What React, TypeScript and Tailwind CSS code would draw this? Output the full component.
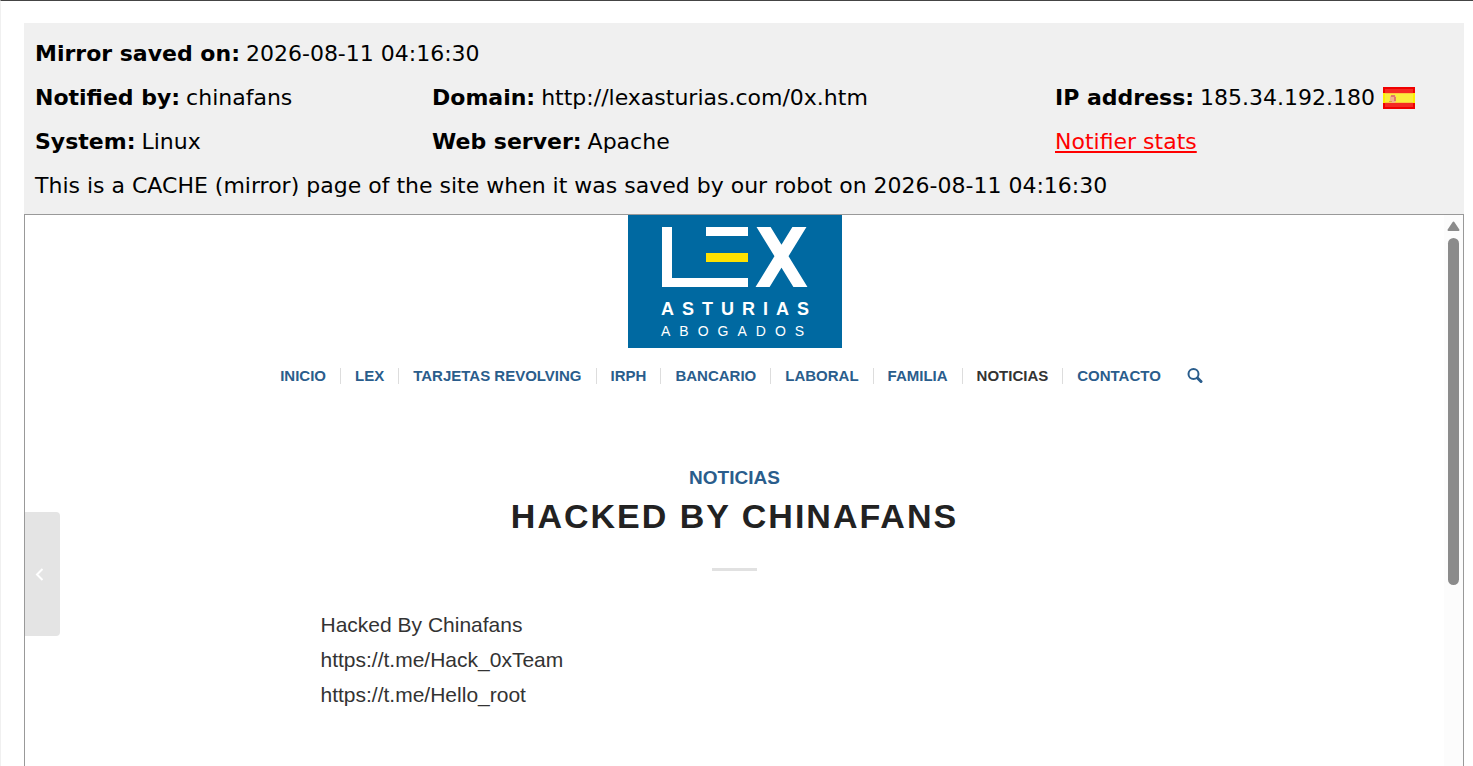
import { ReactNode } from "react";

interface NavItem {
  label: string;
  active?: boolean;
}

const navItems: NavItem[] = [
  { label: "INICIO" },
  { label: "LEX" },
  { label: "TARJETAS REVOLVING" },
  { label: "IRPH" },
  { label: "BANCARIO" },
  { label: "LABORAL" },
  { label: "FAMILIA" },
  { label: "NOTICIAS", active: true },
  { label: "CONTACTO" },
];

const bodyLines = [
  "Hacked By Chinafans",
  "https://t.me/Hack_0xTeam",
  "https://t.me/Hello_root",
];

const Field = ({ label, children }: { label: string; children: ReactNode }) => (
  <div className="flex items-center gap-1.5 whitespace-nowrap">
    <b>{label}</b>
    {children}
  </div>
);

const SpainFlag = () => (
  <svg
    width="32"
    height="22"
    viewBox="0 0 32 22"
    role="img"
    aria-label="Spain"
    className="ml-0.5"
  >
    <rect width="32" height="22" fill="#f00000" />
    <rect x="2" y="2" width="28" height="18" fill="#f52a22" />
    <rect y="6" width="32" height="10" fill="#fcf000" />
    <rect x="2" y="6" width="28" height="10" fill="#fbee3c" />
    <rect x="2" y="6" width="28" height="1" fill="#fbc93c" />
    <rect x="2" y="15" width="28" height="1" fill="#fbc93c" />
    <path d="M7 9h6v4a3 3 0 0 1-6 0z" fill="#f2b48a" />
    <path d="M8 8h4v2H8zM11 10h2v4h-2z" fill="#e2786a" />
    <path d="M6 14h3v1H6z" fill="#d9a04c" />
  </svg>
);

const Logo = () => (
  <svg
    width="214"
    height="133"
    viewBox="0 0 214 133"
    role="img"
    aria-label="Lex Asturias Abogados"
    fontFamily="Liberation Sans, Arial, sans-serif"
    fill="#ffffff"
  >
    <rect width="214" height="133" fill="#0069a1" />
    <rect x="34" y="12" width="10" height="60" />
    <rect x="34" y="63" width="86" height="9" />
    <rect x="78" y="12" width="42" height="9" />
    <rect x="78" y="38" width="42" height="9" fill="#ffe100" />
    {/* crossed strokes, cut flat at the top and bottom */}
    <svg x="124" y="12" width="60" height="60" viewBox="0 0 60 60">
      <path
        d="M4.200 -12L55.800 72M54.800 -12L3.200 72"
        stroke="#ffffff"
        strokeWidth="12"
        fill="none"
      />
    </svg>
    <text x="33" y="100" fontSize="18" fontWeight="700" letterSpacing="8">
      ASTURIAS
    </text>
    <text x="33" y="121" fontSize="14" letterSpacing="9">
      ABOGADOS
    </text>
  </svg>
);

const SearchIcon = () => (
  <svg
    width="16"
    height="16"
    viewBox="0 0 16 16"
    fill="none"
    stroke="currentColor"
    aria-hidden="true"
  >
    <circle cx="6.5" cy="6" r="5" strokeWidth="2" />
    <path d="M10.5 10L14 13.5" strokeWidth="3" strokeLinecap="round" />
  </svg>
);

const MirrorInfo = () => (
  <header className="bg-[#f0f0f0] px-[11px] pt-[9px] pb-1.5 font-['DejaVu_Sans',Verdana,sans-serif] text-[22px] leading-[44px] text-black">
    <div className="grid grid-cols-[397fr_623fr_398fr]">
      <div className="col-span-3">
        <Field label="Mirror saved on:">2026-08-11 04:16:30</Field>
      </div>
      <Field label="Notified by:">chinafans</Field>
      <Field label="Domain:">http://lexasturias.com/0x.htm</Field>
      <Field label="IP address:">
        185.34.192.180
        <SpainFlag />
      </Field>
      <Field label="System:">Linux</Field>
      <Field label="Web server:">Apache</Field>
      <div>
        <a href="#stats" className="text-[#ff0000] underline">
          Notifier stats
        </a>
      </div>
    </div>
    <p>
      This is a CACHE (mirror) page of the site when it was saved by our robot
      on 2026-08-11 04:16:30
    </p>
  </header>
);

const SiteNav = () => (
  <nav className="mt-4 flex h-6 items-center justify-center text-[15px] font-bold text-[#2a5d8c]">
    <ul className="flex items-center">
      {navItems.map((item) => (
        <li
          key={item.label}
          className="border-r border-[#dddddd] px-3.5 leading-4 last:border-r-0"
        >
          <a
            href="#nav"
            className={item.active ? "text-[#333333]" : "text-[#2a5d8c]"}
          >
            {item.label}
          </a>
        </li>
      ))}
    </ul>
    <button type="button" aria-label="Buscar" className="ml-3">
      <SearchIcon />
    </button>
  </nav>
);

const Scrollbar = () => (
  <div className="flex w-[19px] shrink-0 flex-col items-center bg-[#fcfcfc] pt-1.5">
    <svg width="13" height="11" viewBox="0 0 13 11" aria-hidden="true">
      <path
        d="M6.5 1.500L11.500 9H1.500z"
        fill="#8b8b8b"
        stroke="#8b8b8b"
        strokeWidth="2"
        strokeLinejoin="round"
      />
    </svg>
    <div className="mt-1.5 h-[347px] w-[11px] rounded-full bg-[#8b8b8b]" />
  </div>
);

export default function App() {
  return (
    <div className="flex min-h-screen flex-col border-t border-l border-t-[#444444] border-l-[#f0f0f0] bg-white pt-[22px] pr-[9px] pl-[23px]">
      <MirrorInfo />

      {/* Framed copy of the saved page */}
      <div className="relative flex flex-1 border border-b-0 border-[#999999] font-['Liberation_Sans',Arial,sans-serif]">
        <main className="flex-1">
          <div className="flex justify-center">
            <a href="#home">
              <Logo />
            </a>
          </div>
          <SiteNav />

          <article className="mx-auto w-full max-w-[828px] pt-[78px]">
            <div className="flex flex-col items-center">
              <a
                href="#noticias"
                className="text-[19px] leading-6 font-bold text-[#2a5d8c]"
              >
                NOTICIAS
              </a>
              <h1 className="mt-1 text-[34px] leading-[44px] font-bold tracking-[2px] text-[#222222]">
                HACKED BY CHINAFANS
              </h1>
              <div className="mt-[30px] h-[3px] w-[45px] bg-[#e1e1e1]" />
            </div>
            <div className="mt-9 text-[21px] leading-[35px] text-[#333333]">
              {bodyLines.map((line) => (
                <p key={line}>{line}</p>
              ))}
            </div>
          </article>
        </main>
        <Scrollbar />

        {/* Previous post tab */}
        <button
          type="button"
          aria-label="Anterior"
          className="absolute top-[297px] left-0 flex h-[124px] w-[35px] items-center justify-center rounded-r bg-[#e4e4e4] pr-1.5"
        >
          <svg
            width="9"
            height="14"
            viewBox="0 0 9 14"
            fill="none"
            stroke="#ffffff"
            strokeWidth="2"
            aria-hidden="true"
          >
            <path d="M7.500 2L2 7.500l5.500 5.500" />
          </svg>
        </button>
      </div>
    </div>
  );
}
